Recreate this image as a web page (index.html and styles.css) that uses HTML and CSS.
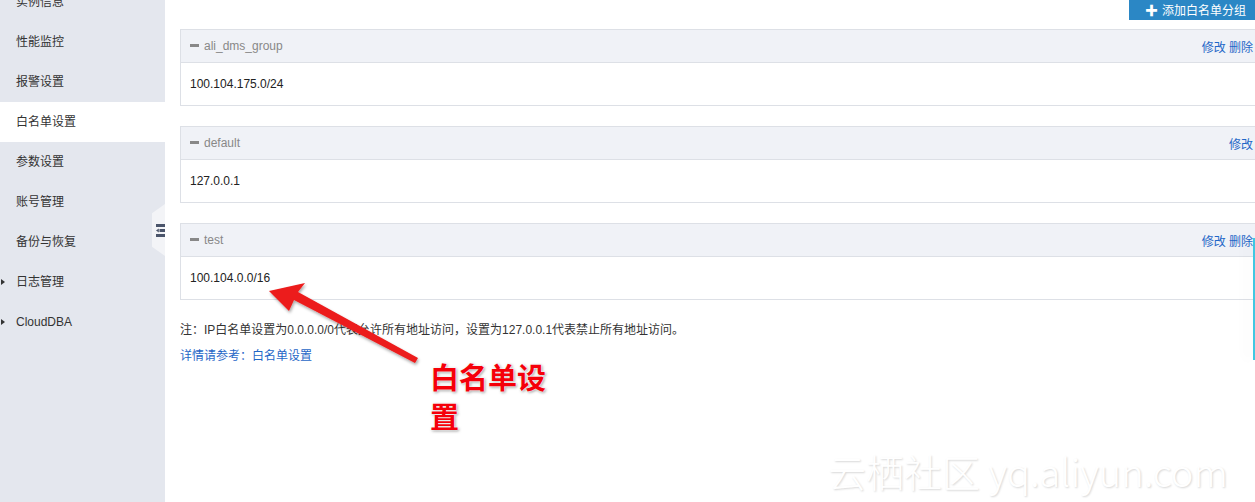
FILE: index.html
```html
<!DOCTYPE html>
<html lang="zh-CN">
<head>
  <meta charset="UTF-8">
  <title>白名单设置</title>
  <link rel="stylesheet" href="styles.css">
</head>
<body>
  <div class="layout">
    <!-- Sidebar menu -->
    <aside class="sidebar">
      <ul class="menu">
        <li>实例信息</li>
        <li>性能监控</li>
        <li>报警设置</li>
        <li class="active">白名单设置</li>
        <li>参数设置</li>
        <li>账号管理</li>
        <li>备份与恢复</li>
        <li class="sub">日志管理</li>
        <li class="sub">CloudDBA</li>
      </ul>
      <div class="toggle">
        <svg width="11" height="13" viewBox="0 0 11 13">
          <rect x="0" y="0" width="11" height="3" fill="#4b556b"/>
          <rect x="3.5" y="5" width="7.5" height="3" fill="#4b556b"/>
          <rect x="0" y="10" width="11" height="3" fill="#4b556b"/>
          <polygon points="0,6.5 2.8,4.5 2.8,8.5" fill="#4b556b"/>
        </svg>
      </div>
    </aside>

    <!-- Main content -->
    <main class="main">
      <div class="toolbar">
        <button class="add-btn"><span class="plus">✚</span>添加白名单分组</button>
      </div>

      <div class="group">
        <div class="group-head">
          <span class="title"><i class="dash"></i>ali_dms_group</span>
          <span class="ops"><a>修改</a> <a>删除</a></span>
        </div>
        <div class="group-body">100.104.175.0/24</div>
      </div>

      <div class="group">
        <div class="group-head">
          <span class="title"><i class="dash"></i>default</span>
          <span class="ops"><a>修改</a></span>
        </div>
        <div class="group-body">127.0.0.1</div>
      </div>

      <div class="group">
        <div class="group-head">
          <span class="title"><i class="dash"></i>test</span>
          <span class="ops"><a>修改</a> <a>删除</a></span>
        </div>
        <div class="group-body">100.104.0.0/16</div>
      </div>

      <p class="note">注：IP白名单设置为0.0.0.0/0代表允许所有地址访问，设置为127.0.0.1代表禁止所有地址访问。</p>
      <p class="more"><a>详情请参考：白名单设置</a></p>

      <div class="side-bar"></div>
    </main>
  </div>

  <!-- Screenshot annotation -->
  <svg class="arrow" width="1255" height="502" viewBox="0 0 1255 502">
    <defs>
      <filter id="sh" x="-10%" y="-10%" width="130%" height="140%">
        <feDropShadow dx="1" dy="2" stdDeviation="1.5" flood-color="#000" flood-opacity="0.35"/>
      </filter>
    </defs>
    <polygon filter="url(#sh)" fill="#ec1c1c"
      points="269,291 305,283 298,292 418,358 415,363 294,300 289,311"/>
  </svg>
  <div class="callout">白名单设<br>置</div>
  <div class="watermark">云栖社区 yq.aliyun.com</div>
</body>
</html>
```

FILE: styles.css
```css
body {
  margin: 0;
  font-family: "Liberation Sans", "Noto Sans CJK SC", sans-serif;
  font-size: 12px;
  color: #333;
  overflow: hidden;
}
.layout {
  display: flex;
  height: 502px;
}
.sidebar {
  position: relative;
  width: 165px;
  flex-shrink: 0;
  background: #e4e7ee;
}
.menu {
  list-style: none;
  margin: -18px 0 0;
  padding: 0;
}
.menu li {
  position: relative;
  height: 40px;
  line-height: 40px;
  padding-left: 16px;
  color: #333;
}
.menu li.active {
  background: #fff;
}
.menu li.sub::before {
  content: "";
  position: absolute;
  left: 1px;
  top: 17px;
  border-left: 4px solid #333;
  border-top: 3px solid transparent;
  border-bottom: 3px solid transparent;
}
.toggle {
  position: absolute;
  left: 152px;
  top: 204px;
  width: 13px;
  height: 52px;
  background: #f3f4f7;
  clip-path: polygon(100% 0, 100% 100%, 0 82%, 0 18%);
  display: flex;
  align-items: center;
  justify-content: flex-end;
}
.toggle svg {
  transform: translateX(2px);
}
.main {
  position: relative;
  flex: 1;
  padding: 0 0 0 15px;
  margin-right: -10px;
}
.toolbar {
  display: flex;
  justify-content: flex-end;
  height: 29px;
}
.add-btn {
  height: 30px;
  margin-top: -10px;
  padding: 9px 12px 0 16px;
  background: #2b87c5;
  color: #fff;
  border: none;
  font-family: inherit;
  font-size: 12px;
  width: 136px;
  text-align: left;
}
.plus {
  margin-right: 4px;
  font-size: 13px;
}
.group {
  border: 1px solid #dde0e6;
  margin-bottom: 20px;
}
.group-head {
  display: flex;
  justify-content: space-between;
  align-items: center;
  height: 32px;
  padding: 0 11px 0 9px;
  background: #f0f2f7;
  border-bottom: 1px solid #dde0e6;
  color: #888;
}
.dash {
  display: inline-block;
  width: 9px;
  height: 3px;
  background: #888;
  margin-right: 5px;
  vertical-align: 3px;
}
.ops a {
  color: #1f67c7;
}
.group-body {
  height: 42px;
  line-height: 42px;
  padding-left: 9px;
  color: #222;
}
.note {
  margin: 19px 0 0;
  color: #333;
}
.more {
  margin: 9px 0 0;
}
.more a {
  color: #1f67c7;
}
.side-bar {
  position: absolute;
  right: 10px;
  top: 238px;
  width: 2px;
  height: 122px;
  background: #40c8e2;
  box-shadow: -6px 0 12px rgba(0, 0, 0, 0.08);
}
.arrow {
  position: absolute;
  left: 0;
  top: 0;
  pointer-events: none;
}
.callout {
  position: absolute;
  left: 430px;
  top: 357px;
  font-family: "Noto Sans CJK SC", sans-serif;
  font-size: 29px;
  font-weight: 700;
  line-height: 39px;
  color: #f5000a;
  text-shadow: 0 0 2px #fff, 0 0 2px #fff, 1px 1px 3px rgba(0, 0, 0, 0.5);
}
.watermark {
  position: absolute;
  left: 828px;
  top: 443px;
  font-family: "Noto Sans CJK SC", sans-serif;
  font-size: 38px;
  font-weight: 300;
  color: #fff;
  white-space: nowrap;
  text-shadow: 1px 1px 2px rgba(0, 0, 0, 0.16);
}
```
